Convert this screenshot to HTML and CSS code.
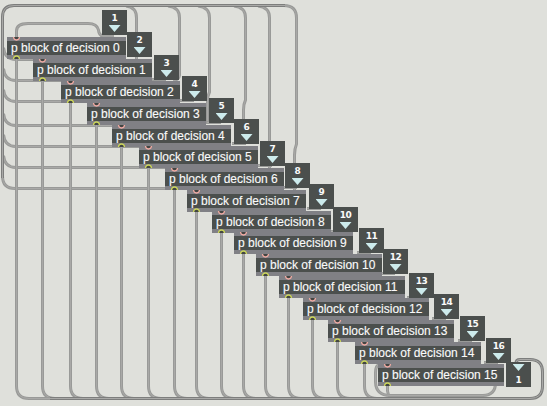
FILE: index.html
```html
<!DOCTYPE html>
<html lang="en">
<head>
<meta charset="utf-8">
<title>Decision patch</title>
<link rel="stylesheet" href="styles.css">
</head>
<body>
<main class="patch" id="patch">
<svg class="wires" id="wires" width="547" height="406" viewBox="0 0 547 406"></svg>
</main>
<script src="patch.js"></script>
</body>
</html>
```
FILE: styles.css
```css
body {
  margin: 0;
  background: #dfe0db;
  font-family: "Liberation Sans", Arial, sans-serif;
}

.patch {
  position: relative;
  width: 547px;
  height: 406px;
  overflow: hidden;
}

.wires {
  position: absolute;
  inset: 0;
}

.wires path {
  fill: none;
}

.edge {
  stroke: #999a98;
  stroke-width: 3;
}

.core {
  stroke: #a9a9a7;
  stroke-width: 1;
}

.edge.bus {
  stroke: #7d7e7d;
}

.block {
  position: absolute;
  box-sizing: border-box;
  width: 119px;
  height: 22px;
  padding-left: 4px;
  border: solid #808085;
  border-width: 4px 0;
  background: #4b4f4d;
  color: #fafafa;
  font-size: 12px;
  line-height: 14px;
  white-space: nowrap;
  -webkit-text-stroke: 0.12px #fafafa;
}

.block.wide {
  width: 126px;
}

.port {
  position: absolute;
  left: 6px;
  width: 7px;
  height: 4px;
  overflow: visible;
}

.port path {
  fill: #424543;
  stroke-width: 1.3;
}

.inlet {
  top: -4px;
  stroke: #efaaa2;
}

.outlet {
  bottom: -4px;
  stroke: #ccd65a;
}

.button {
  position: absolute;
  box-sizing: border-box;
  display: flex;
  flex-direction: column;
  align-items: center;
  gap: 2px;
  width: 25px;
  height: 25px;
  padding-top: 3px;
  background: #4b4f4d;
  color: #fafafa;
  font-family: "DejaVu Sans", sans-serif;
  font-size: 9px;
  font-weight: bold;
  letter-spacing: -0.4px;
  line-height: 10px;
}

.button.end {
  flex-direction: column-reverse;
  justify-content: flex-end;
  padding-top: 2px;
}

.arrow {
  width: 12px;
  height: 7px;
  flex: none;
  background: #cdebec;
  clip-path: polygon(0 0, 100% 0, 50% 100%);
}
.end .arrow {
  margin-bottom: 2px;
}
```
FILE: patch.js
```js
const patch = document.getElementById("patch");
const wires = document.getElementById("wires");

const blocks = [
  [7, 37], [33, 59], [61, 81], [87, 103], [112, 125], [139, 146],
  [165, 168], [187, 190], [212, 211], [234, 232], [256, 254], [279, 276],
  [303, 298], [328, 320], [355, 342], [378, 364]
];
const buttons = [
  [102, 10], [127, 32], [154, 55], [182, 76], [209, 98], [234, 119],
  [260, 141], [285, 163], [309, 184], [333, 207], [359, 228], [383, 249],
  [409, 273], [434, 294], [460, 316], [486, 338]
];

function wire(d, bus) {
  const kind = bus ? " bus" : "";
  wires.insertAdjacentHTML("beforeend",
    `<path class="edge${kind}" d="${d}"/><path class="core" d="${d}"/>`);
}

// Feedback loops returning to the left edge
[59.5, 80.5, 101.5, 125.5, 146.5, 167.5].forEach((y, i) => {
  wire(`M3.5 ${y - 12} Q4.5 ${y} 16 ${y} H${blocks[i + 1][0] + 4}`);
});
wire("M2.5 170 V176 Q2.5 188.5 15 188.5 H170");

// Drops from the top bus
[
  "M126 6 Q136.5 7 136.5 18 V59",
  "M168 6 Q179.5 7 179.5 18 V75 Q179 80 173 80.5",
  "M198 6 Q209.5 7 209.5 18 V92 Q207.5 96 207.5 101 V124",
  "M234 6 Q245.5 7 245.5 18 V100 Q243.5 104 243.5 110 V145",
  "M258 6 Q269.5 7 269.5 18 V168",
  "M284 5.5 Q296.5 5.5 296.5 18 V144 Q294.5 149 294.5 155 V190"
].forEach(d => wire(d));

// Outlets running down to the bottom bus
blocks.forEach(([x, y], i) => {
  if (i < 15) wire(`M${x + 9.5} ${y + 21} V386 Q${x + 9.5} 398.5 ${x + 22} 398.5`);
});
wire("M28 398.5 H52");
wire("M387.5 385 V391 Q388 398 397 398.5");

wire("M2.5 178 V17 Q2.5 5.5 14 5.5 H285", true);
wire("M50 398.5 H530 Q542.5 398.5 542.5 386 V372 Q542.5 359.5 530 359.5 H520 Q516 359.5 516 363", true);
wire("M380 364 Q375.5 365 375.5 373 V382 Q376 395.5 390 395.5 H483 Q495.5 395 495.5 383 V362");
wire("M114 36 H103 Q99 35.5 98.5 30 Q97 23.5 88 23.5 H28 Q16.5 23.5 16.5 31 V37");

// Short links from each button to its block
buttons.slice(2).forEach(([x, y]) => {
  wire(`M${x - 2} ${y + 24.5} H${x + 12}`);
});

blocks.forEach(([x, y], i) => {
  patch.insertAdjacentHTML("beforeend",
    `<div class="block${i > 9 ? " wide" : ""}" style="left:${x}px;top:${y}px">
      <svg class="port inlet" viewBox="0 0 7 4"><path d="M.5 0 Q.8 3 3.5 3 Q6.2 3 6.5 0"/></svg>
      p block of decision ${i}
      <svg class="port outlet" viewBox="0 0 7 4"><path d="M.5 4 Q.8 1 3.5 1 Q6.2 1 6.5 4"/></svg>
    </div>`);
});

buttons.forEach(([x, y], i) => {
  patch.insertAdjacentHTML("beforeend",
    `<div class="button" style="left:${x}px;top:${y}px"><span>${i + 1}</span><i class="arrow"></i></div>`);
});
patch.insertAdjacentHTML("beforeend",
  `<div class="button end" style="left:506px;top:362px"><span>1</span><i class="arrow"></i></div>`);
```
